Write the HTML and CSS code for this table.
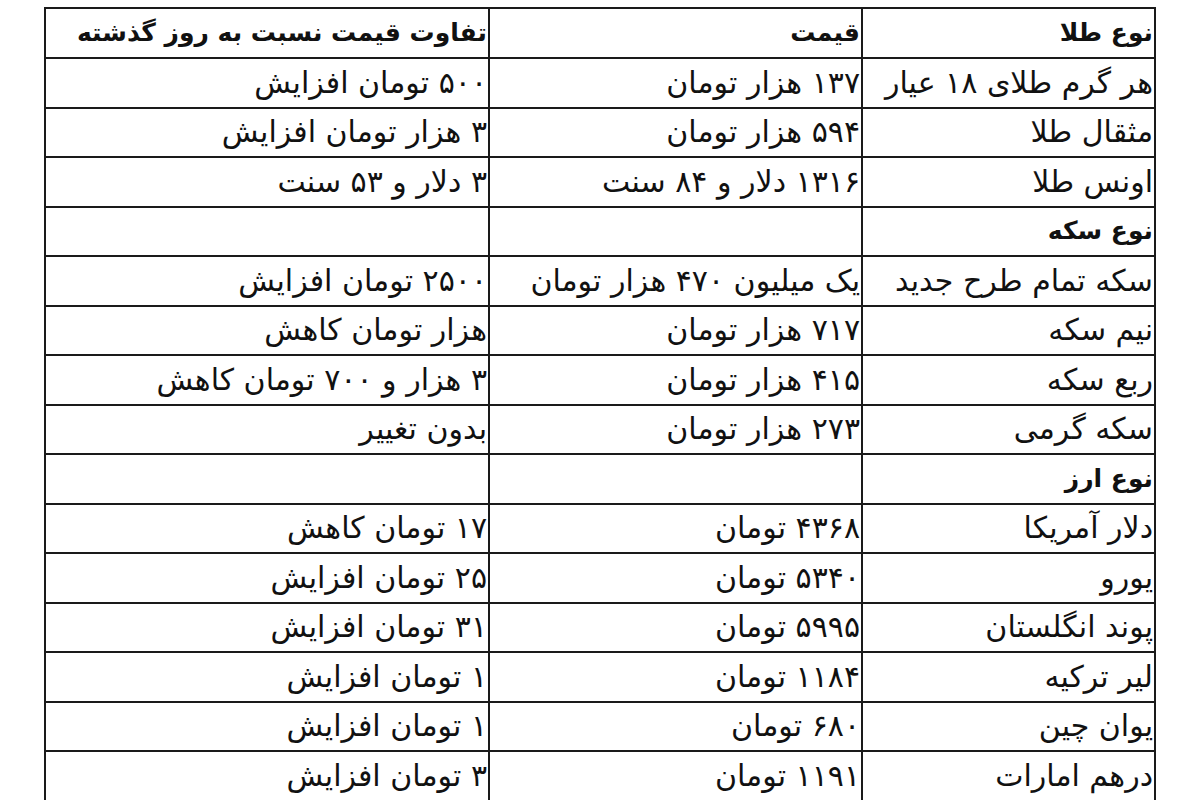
FILE: index.html
```html
<!DOCTYPE html>
<html lang="fa" dir="rtl">
<head>
<meta charset="utf-8">
<title>قیمت طلا، سکه و ارز</title>
<link rel="stylesheet" href="styles.css">
</head>
<body>
<div class="page">
<table class="prices">
  <colgroup>
    <col class="c-type">
    <col class="c-price">
    <col class="c-diff">
  </colgroup>
  <tr class="head">
    <th>نوع طلا</th>
    <th>قیمت</th>
    <th>تفاوت قیمت نسبت به روز گذشته</th>
  </tr>
  <tr><td>هر گرم طلای ۱۸ عیار</td><td>۱۳۷ هزار تومان</td><td>۵۰۰ تومان افزایش</td></tr>
  <tr><td>مثقال طلا</td><td>۵۹۴ هزار تومان</td><td>۳ هزار تومان افزایش</td></tr>
  <tr><td>اونس طلا</td><td>۱۳۱۶ دلار و ۸۴ سنت</td><td>۳ دلار و ۵۳ سنت</td></tr>
  <tr class="group"><th>نوع سکه</th><td></td><td></td></tr>
  <tr><td>سکه تمام طرح جدید</td><td>یک میلیون ۴۷۰ هزار تومان</td><td>۲۵۰۰ تومان افزایش</td></tr>
  <tr><td>نیم سکه</td><td>۷۱۷ هزار تومان</td><td>هزار تومان کاهش</td></tr>
  <tr><td>ربع سکه</td><td>۴۱۵ هزار تومان</td><td>۳ هزار و ۷۰۰ تومان کاهش</td></tr>
  <tr><td>سکه گرمی</td><td>۲۷۳ هزار تومان</td><td>بدون تغییر</td></tr>
  <tr class="group"><th>نوع ارز</th><td></td><td></td></tr>
  <tr><td>دلار آمریکا</td><td>۴۳۶۸ تومان</td><td>۱۷ تومان کاهش</td></tr>
  <tr><td>یورو</td><td>۵۳۴۰ تومان</td><td>۲۵ تومان افزایش</td></tr>
  <tr><td>پوند انگلستان</td><td>۵۹۹۵ تومان</td><td>۳۱ تومان افزایش</td></tr>
  <tr><td>لیر ترکیه</td><td>۱۱۸۴ تومان</td><td>۱ تومان افزایش</td></tr>
  <tr><td>یوان چین</td><td>۶۸۰ تومان</td><td>۱ تومان افزایش</td></tr>
  <tr><td>درهم امارات</td><td>۱۱۹۱ تومان</td><td>۳ تومان افزایش</td></tr>
</table>
</div>
</body>
</html>
```
FILE: styles.css
```css
html, body {
  margin: 0;
  padding: 0;
  background: #ffffff;
}

.page {
  padding: 7px 44px 0 46px;
}

.prices {
  border-collapse: collapse;
  table-layout: fixed;
  width: 1110px;
  font-family: "DejaVu Sans", sans-serif;
  font-size: 30px;
  line-height: 36px;
  color: #111111;
}

.c-type { width: 293px; }
.c-price { width: 373px; }
.c-diff { width: 444px; }

.prices th,
.prices td {
  border: 2px solid #1a1a1a;
  padding: 0 1px 0 4px;
  text-align: right;
  vertical-align: middle;
  white-space: nowrap;
  overflow: hidden;
  font-weight: normal;
}

.prices tr {
  height: 49.5px;
}

.prices tr.head {
  height: 50px;
}

.prices th {
  font-weight: bold;
  font-size: 25px;
}
```
